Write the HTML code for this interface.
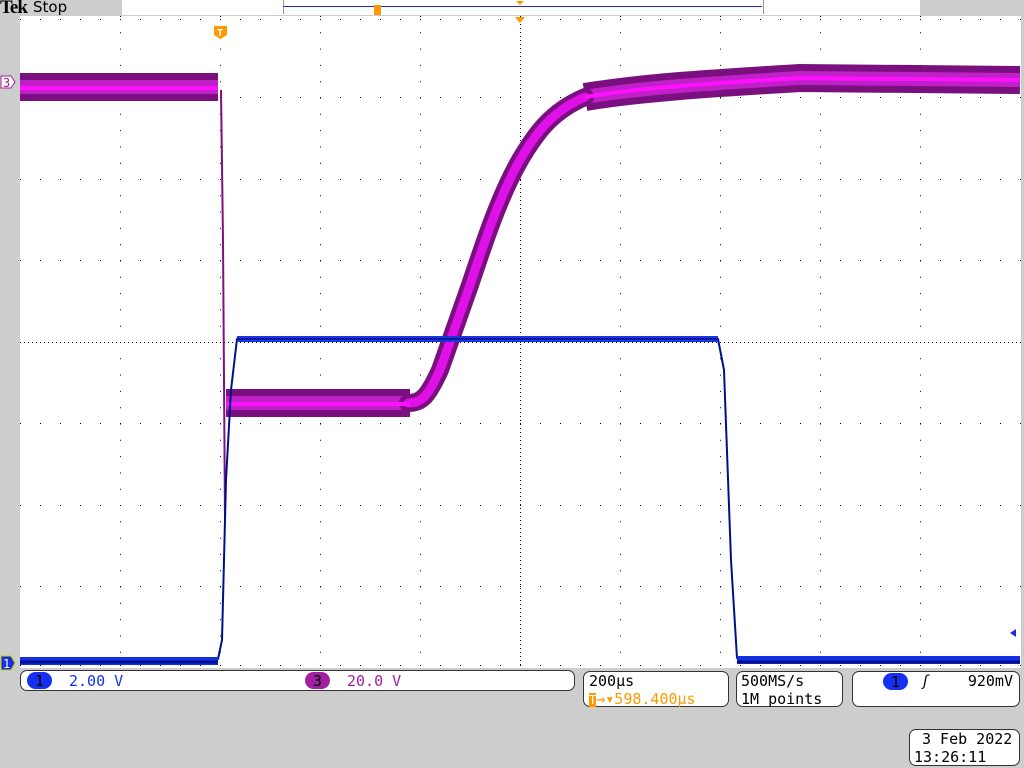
<!DOCTYPE html>
<html><head><meta charset="utf-8"><style>
body{margin:0;width:1024px;height:768px;background:#cdcdcd;overflow:hidden;font-family:"DejaVu Sans Mono","Liberation Mono",monospace;position:relative}
.box{position:absolute;background:#fff;border:1px solid #333;border-radius:7px;box-sizing:border-box;font-size:15px;line-height:18px;color:#000}
</style></head><body>
<div style="position:absolute;left:0;top:-3px;font:bold 19px 'Liberation Serif',serif;letter-spacing:-1px">Tek</div>
<div style="position:absolute;left:33px;top:-2px;font-size:15px;font-family:'DejaVu Sans',sans-serif">Stop</div>
<div style="position:absolute;left:122px;top:0;width:798px;height:15px;background:#fff"></div>
<div style="position:absolute;left:283px;top:0;width:479px;height:14px;border-left:1px solid #999;border-right:1px solid #999"></div>
<div style="position:absolute;left:283px;top:6px;width:479px;height:1px;background:#1a2ad0"></div>
<div style="position:absolute;left:374px;top:5px;width:7px;height:10px;background:#f90"></div>
<svg style="position:absolute;left:0;top:0" width="1024" height="768">
<polygon points="516,1 524,1 520,5" fill="#f90"/>
<rect x="20" y="16" width="1001" height="652" fill="#fff"/>
<g stroke="#000" stroke-width="1">
<g stroke-dasharray="1,19">
<line x1="20" y1="97.5" x2="1021" y2="97.5"/><line x1="20" y1="179.5" x2="1021" y2="179.5"/><line x1="20" y1="260.5" x2="1021" y2="260.5"/><line x1="20" y1="423.5" x2="1021" y2="423.5"/><line x1="20" y1="505.5" x2="1021" y2="505.5"/><line x1="20" y1="586.5" x2="1021" y2="586.5"/>
</g>
<g stroke-dasharray="1,15.3">
<line x1="120.5" y1="16" x2="120.5" y2="668"/><line x1="220.5" y1="16" x2="220.5" y2="668"/><line x1="320.5" y1="16" x2="320.5" y2="668"/><line x1="420.5" y1="16" x2="420.5" y2="668"/><line x1="620.5" y1="16" x2="620.5" y2="668"/><line x1="720.5" y1="16" x2="720.5" y2="668"/><line x1="820.5" y1="16" x2="820.5" y2="668"/><line x1="920.5" y1="16" x2="920.5" y2="668"/>
</g>
<line x1="20" y1="342.5" x2="1021" y2="342.5" stroke-dasharray="1,3"/>
<line x1="520.5" y1="16" x2="520.5" y2="668" stroke-dasharray="1,3"/>
<line x1="20" y1="19.5" x2="1021" y2="19.5" stroke-dasharray="1,19"/>
<line x1="20" y1="665.5" x2="1021" y2="665.5" stroke-dasharray="1,19"/>
</g>
<polygon points="515,17 525,17 520,23" fill="#f90"/>
<path d="M214,26h13v9l-6.5,4l-6.5,-4z" fill="#f90"/><text x="217" y="36" fill="#fff" font-size="10" font-weight="bold">T</text>
<g fill="none" stroke-linejoin="round" stroke-linecap="butt">
<path d="M20,87 L218,87 M226,403 L410,403 M585,97 C640,88 700,84 800,78 L1020,80" stroke="#7a1080" stroke-width="28"/>
<path d="M20,87 L218,87 M226,403 L410,403 M585,97 C640,88 700,84 800,78 L1020,80" stroke="#c020c8" stroke-width="14"/>
</g>
<g fill="none" stroke-linejoin="round" stroke-linecap="round">
<path d="M408,403 C422,403 428,396 440,370 L470,285 C485,240 500,195 520,160 C535,135 550,112 585,97" stroke="#7a1080" stroke-width="18"/>
<path d="M408,403 C422,403 428,396 440,370 L470,285 C485,240 500,195 520,160 C535,135 550,112 585,97" stroke="#e010e8" stroke-width="9"/>
</g>
<g fill="none" stroke-linejoin="round">
<path d="M20,88 L218,88 M226,404 L410,404 M585,97 C640,88 700,84 800,78 L1020,80" stroke="#ff10ff" stroke-width="4"/>
<path d="M221,90 L223,240 L225,520" stroke="#801080" stroke-width="2"/>
<path d="M20,659 L218,659 L222,640 L226,480 L231,390 L237,339 L718,339 L724,370 L731,560 L737,658 L1020,658" stroke="#00108a" stroke-width="2"/>
<path d="M20,661 H218 M737,660 H1020" stroke="#1530e0" stroke-width="8"/>
<path d="M20,662 H218 M737,662 H1020" stroke="#001090" stroke-width="3"/>
<path d="M237,339 H718" stroke="#1d35e0" stroke-width="6"/>
<path d="M237,339 H718" stroke="#0a1a9a" stroke-width="2"/>
</g>
<path d="M1,76h10l4,6l-4,6h-10z" fill="#fff" stroke="#a020a0"/><text x="3" y="87" fill="#a020a0" font-size="12">3</text>
<path d="M1,656h10l4,7l-4,7h-10z" fill="#1530e0" stroke="#cc0"/><text x="3" y="668" fill="#fff" font-size="12">1</text>
<polygon points="1010,633 1016,629 1016,637" fill="#1530e0"/>
</svg>
<div class="box" style="left:20px;top:670px;width:555px;height:21px">
<span style="position:absolute;left:6px;top:1px;width:25px;height:17px;border-radius:9px;background:#1530f0;text-align:center">1</span>
<span style="position:absolute;left:48px;top:1px;color:#1530f0">2.00 V</span>
<span style="position:absolute;left:284px;top:1px;width:25px;height:17px;border-radius:9px;background:#a020a0;text-align:center">3</span>
<span style="position:absolute;left:326px;top:1px;color:#a020a0">20.0 V</span>
</div>
<div class="box" style="left:583px;top:671px;width:146px;height:36px;padding-left:5px">200µs<br><span style="color:#f90"><span style="background:#f90;color:#fff;font-size:12px">T</span>→▾598.400µs</span></div>
<div class="box" style="left:736px;top:671px;width:107px;height:36px;padding-left:4px">500MS/s<br>1M points</div>
<div class="box" style="left:852px;top:671px;width:168px;height:36px">
<span style="position:absolute;left:30px;top:1px;width:25px;height:17px;border-radius:9px;background:#1530f0;text-align:center">1</span>
<span style="position:absolute;left:68px;top:0px;font-style:italic">ʃ</span>
<span style="position:absolute;right:6px;top:0px">920mV</span></div>
<div class="box" style="left:909px;top:729px;width:111px;height:37px;padding-left:12px">3 Feb 2022<br><span style="margin-left:-8px">13:26:11</span></div>
</body></html>
